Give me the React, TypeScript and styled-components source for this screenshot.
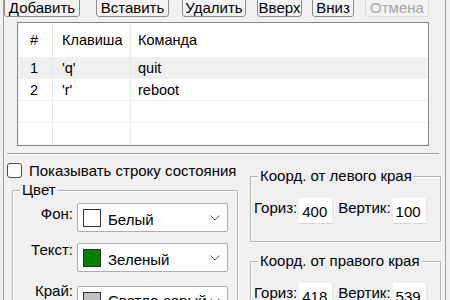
import React from 'react';
import styled, { createGlobalStyle } from 'styled-components';

const GlobalStyle = createGlobalStyle`
  html, body {
    margin: 0;
    padding: 0;
    background: #f0f0f0;
    overflow: hidden;
  }
  body {
    font-family: "Liberation Sans", Arial, sans-serif;
    font-size: 15px;
    color: #000;
  }
`;

const Frame = styled.div`
  box-sizing: border-box;
  margin-left: 3px;
  width: 443px;
  height: 300px;
  overflow: hidden;
  border-left: 1px solid #a0a0a0;
  border-right: 1px solid #a0a0a0;
`;

const Toolbar = styled.div`
  display: flex;
  margin-top: -6px;
  height: 23px;
`;

const Button = styled.button<{ $w: number; $ml: number }>`
  box-sizing: border-box;
  width: ${(p) => p.$w}px;
  margin-left: ${(p) => p.$ml}px;
  height: 23px;
  padding: 3px 0 0;
  border: 1px solid #8c8c8c;
  border-radius: 3px;
  background: #f4f4f4;
  font: inherit;
  color: #000;
  line-height: 17px;
  white-space: nowrap;

  &:disabled {
    border-color: #dadada;
    background: #f3f3f3;
    color: #a6a6a6;
  }
`;

const Table = styled.div`
  box-sizing: border-box;
  margin: 5px 0 0 13px;
  width: 412px;
  height: 124px;
  border: 1px solid #828790;
  background: #fff;
  overflow: hidden;
`;

const Row = styled.div<{ $head?: boolean; $sel?: boolean }>`
  display: grid;
  grid-template-columns: 35px 78px 1fr;
  height: ${(p) => (p.$head ? 34 : 22)}px;
  background: ${(p) => (p.$sel ? '#efefef' : '#fff')};
  border-bottom: ${(p) => (p.$head ? 'none' : '1px solid #f0f0f0')};
  box-sizing: border-box;
`;

const Cell = styled.div<{ $pad: number }>`
  display: flex;
  align-items: center;
  padding-left: ${(p) => p.$pad}px;
  border-right: 1px solid #e8e8e8;
  font-size: 14.5px;
  white-space: nowrap;
  &:last-child {
    border-right: none;
  }
`;

const Separator = styled.div`
  margin: 7px 0 0 3px;
  width: 432px;
  height: 1px;
  background: #a0a0a0;
  box-shadow: 0 1px 0 #fff;
`;

const Bottom = styled.div`
  display: flex;
`;

const LeftCol = styled.div`
  width: 246px;
`;

const RightCol = styled.div`
  padding-top: 22px;
  width: 191px;
`;

const CheckRow = styled.label`
  display: flex;
  align-items: center;
  gap: 7px;
  margin: 8px 0 0 3px;
  height: 16px;
  white-space: nowrap;
`;

const CheckBox = styled.span`
  box-sizing: border-box;
  width: 15px;
  height: 15px;
  border: 1px solid #4a4a4a;
  border-radius: 3px;
  background: #fff;
`;

const Group = styled.div<{ $h: number; $mt: number; $ml: number; $w: number }>`
  position: relative;
  box-sizing: border-box;
  margin: ${(p) => p.$mt}px 0 0 ${(p) => p.$ml}px;
  width: ${(p) => p.$w}px;
  height: ${(p) => p.$h}px;
  border: 1px solid #b4b4b4;
  box-shadow: inset 1px 1px 0 #fff, 1px 1px 0 #fff;
`;

const Caption = styled.span`
  position: absolute;
  top: -10px;
  left: 7px;
  padding: 0 2px;
  background: #f0f0f0;
  line-height: 18px;
  white-space: nowrap;
`;

const ColorRow = styled.div<{ $mt: number }>`
  display: flex;
  align-items: flex-start;
  margin-top: ${(p) => p.$mt}px;
`;

const FieldLabel = styled.span<{ $dy: number }>`
  width: 60px;
  text-align: right;
  margin-top: ${(p) => p.$dy}px;
  line-height: 17px;
  white-space: nowrap;
`;

const Combo = styled.div<{ $ty: number }>`
  box-sizing: border-box;
  display: flex;
  align-items: center;
  margin-left: 4px;
  width: 151px;
  height: 29px;
  border: 1px solid #adadad;
  border-radius: 2px;
  background: #fff;
  padding: 0 7px 0 5px;

  & > span:nth-child(2) {
    padding-top: ${(p) => p.$ty}px;
  }
`;

const Swatch = styled.span<{ $c: string }>`
  box-sizing: border-box;
  flex: none;
  width: 18px;
  height: 18px;
  border: 1px solid #333;
  background: ${(p) => p.$c};
`;

const ComboText = styled.span`
  flex: 1;
  margin-left: 7px;
  white-space: nowrap;
  overflow: hidden;
`;

const Chevron = () => (
  <svg width="10" height="6" viewBox="0 0 10 6">
    <polyline points="0.5,0.5 5,5 9.5,0.5" fill="none" stroke="#555" strokeWidth="1" />
  </svg>
);

const CoordRow = styled.div`
  display: flex;
  align-items: flex-start;
  padding: 22px 0 0 3px;
`;

const CoordLabel = styled.span<{ $ml: number }>`
  margin-left: ${(p) => p.$ml}px;
  line-height: 18px;
  white-space: nowrap;
`;

const NumBox = styled.span`
  box-sizing: border-box;
  flex: none;
  width: 34px;
  height: 26px;
  margin-left: 2px;
  margin-top: -1px;
  padding: 5px 0 0 3px;
  background: #fff;
  border-bottom: 1px solid #d8d8d8;
  border-right: 1px solid #e4e4e4;
`;

const rows = [
  { n: '1', k: "'q'", c: 'quit', sel: true },
  { n: '2', k: "'r'", c: 'reboot', sel: false },
  { n: '', k: '', c: '', sel: false },
  { n: '', k: '', c: '', sel: false },
];

const colors = [
  { label: 'Фон:', name: 'Белый', c: '#ffffff', mt: 12, dy: 2, ty: 3 },
  { label: 'Текст:', name: 'Зеленый', c: '#008000', mt: 11, dy: -2, ty: 3 },
  { label: 'Край:', name: 'Светло-серый', c: '#c0c0c0', mt: 14, dy: -4, ty: 0 },
];

export default function App() {
  return (
    <>
      <GlobalStyle />
      <Frame>
        <Toolbar>
          <Button $w={76} $ml={0}>Добавить</Button>
          <Button $w={73} $ml={16}>Вставить</Button>
          <Button $w={64} $ml={13}>Удалить</Button>
          <Button $w={45} $ml={11}>Вверх</Button>
          <Button $w={42} $ml={10}>Вниз</Button>
          <Button $w={64} $ml={11} disabled>Отмена</Button>
        </Toolbar>
        <Table>
          <Row $head>
            <Cell $pad={12}>#</Cell>
            <Cell $pad={9}>Клавиша</Cell>
            <Cell $pad={7}>Команда</Cell>
          </Row>
          {rows.map((r, i) => (
            <Row key={i} $sel={r.sel}>
              <Cell $pad={12}>{r.n}</Cell>
              <Cell $pad={9}>{r.k}</Cell>
              <Cell $pad={7}>{r.c}</Cell>
            </Row>
          ))}
        </Table>
        <Separator />
        <Bottom>
          <LeftCol>
            <CheckRow>
              <CheckBox />
              Показывать строку состояния
            </CheckRow>
            <Group $mt={12} $ml={8} $w={226} $h={140}>
              <Caption>Цвет</Caption>
              {colors.map((c) => (
                <ColorRow key={c.label} $mt={c.mt}>
                  <FieldLabel $dy={c.dy}>{c.label}</FieldLabel>
                  <Combo $ty={c.ty}>
                    <Swatch $c={c.c} />
                    <ComboText>{c.name}</ComboText>
                    <Chevron />
                  </Combo>
                </ColorRow>
              ))}
            </Group>
          </LeftCol>
          <RightCol>
            <Group $mt={0} $ml={0} $w={191} $h={66}>
              <Caption>Коорд. от левого края</Caption>
              <CoordRow>
                <CoordLabel $ml={0}>Гориз:</CoordLabel>
                <NumBox>400</NumBox>
                <CoordLabel $ml={5}>Вертик:</CoordLabel>
                <NumBox>100</NumBox>
              </CoordRow>
            </Group>
            <Group $mt={19} $ml={0} $w={191} $h={80}>
              <Caption>Коорд. от правого края</Caption>
              <CoordRow>
                <CoordLabel $ml={0}>Гориз:</CoordLabel>
                <NumBox>418</NumBox>
                <CoordLabel $ml={5}>Вертик:</CoordLabel>
                <NumBox>539</NumBox>
              </CoordRow>
            </Group>
          </RightCol>
        </Bottom>
      </Frame>
    </>
  );
}
